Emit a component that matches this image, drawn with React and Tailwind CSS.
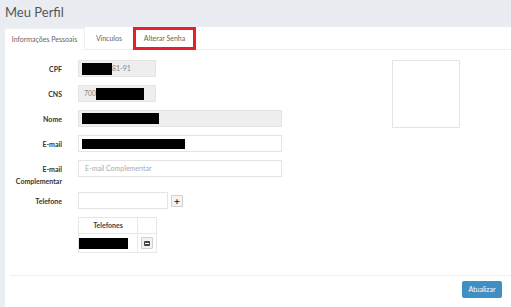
import React from 'react'

const font = { fontFamily: 'Lato, "Open Sans", "Liberation Sans", sans-serif' }

function Field({ label, children, className = 'mb-[8px]' }) {
  return (
    <div className={`flex items-start ${className}`}>
      <div className="w-[57px] shrink-0 text-right text-[7px] font-bold leading-[12px] pt-[3px] text-[#333]">
        {label}
      </div>
      <div className="ml-[16px]">{children}</div>
    </div>
  )
}

export default function App() {
  return (
    <div className="w-[511px] h-[307px] bg-[#e9edf2] overflow-hidden flex flex-col" style={font}>
      {/* page title */}
      <div className="h-[27px] px-[5px] flex items-center text-[13px] text-[#555] leading-none pb-[2px]">
        Meu Perfil
      </div>

      <div className="flex-1 ml-[5px] bg-white flex flex-col">
        {/* tabs */}
        <div className="h-[23px] flex border-b border-[#eceef1] text-[7px] text-[#666]">
          <div className="w-[80px] border-t-2 border-[#60a3d1] border-r border-[#eceef1] flex items-center justify-center -mb-px bg-white">
            Informações Pessoais
          </div>
          <div className="w-[48px] flex items-center justify-center">Vínculos</div>
          <div className="w-[63px] border-[3px] border-[#e5202b] flex items-center justify-center -mb-px">
            Alterar Senha
          </div>
        </div>

        {/* form */}
        <div className="flex pt-[10px]">
          <div className="w-[277px]">
            <Field label="CPF">
              <div className="w-[78px] h-[17px] bg-[#eeeeee] border border-[#e4e4e4] flex items-center pl-[3px] text-[7px] text-[#888]">
                <span className="w-[30px] h-[12px] bg-black" />
                <span>81-91</span>
              </div>
            </Field>
            <Field label="CNS">
              <div className="w-[78px] h-[17px] bg-[#eeeeee] border border-[#e4e4e4] flex items-center pl-[5px] text-[7px] text-[#888]">
                <span>700</span>
                <span className="w-[48px] h-[12px] bg-black" />
              </div>
            </Field>
            <Field label="Nome">
              <div className="w-[204px] h-[17px] bg-[#eeeeee] border border-[#e4e4e4] flex items-center pl-[3px]">
                <span className="w-[77px] h-[11px] bg-black" />
              </div>
            </Field>
            <Field label="E-mail">
              <div className="w-[204px] h-[17px] bg-white border border-[#e4e4e4] flex items-center pl-[3px]">
                <span className="w-[103px] h-[10px] bg-black" />
              </div>
            </Field>
            <Field label={<>E-mail<br />Complementar</>} className="mb-[5px]">
              <div className="w-[204px] h-[17px] bg-white border border-[#e4e4e4] flex items-center pl-[6px] text-[7px] text-[#aaa]">
                E-mail Complementar
              </div>
            </Field>
            <Field label="Telefone">
              <div className="flex items-center">
                <div className="w-[90px] h-[17px] bg-white border border-[#e4e4e4]" />
                <div className="ml-[3px] w-[12px] h-[12px] border border-[#cfcfcf] bg-[#f4f4f4] rounded-[1px] flex items-center justify-center text-[10px] font-bold leading-none text-[#333]">
                  +
                </div>
              </div>
            </Field>
            <div className="ml-[73px]">
              <table className="border-collapse text-[7px]">
                <tbody>
                  <tr className="h-[16px]">
                    <th className="w-[59px] border border-[#e7e7e7] font-bold text-[#444]">Telefones</th>
                    <th className="w-[19px] border border-[#e7e7e7]" />
                  </tr>
                  <tr className="h-[19px]">
                    <td className="border border-[#e7e7e7] p-0 align-middle">
                      <div className="w-[49px] h-[11px] bg-black" />
                    </td>
                    <td className="border border-[#e7e7e7] p-0">
                      <div className="mx-auto w-[12px] h-[12px] border border-[#cfcfcf] bg-[#f2f2f2] rounded-[1px] flex items-center justify-center">
                        <div className="w-[6px] h-[5px] bg-[#444] rounded-[1px] flex items-center justify-center">
                          <div className="w-[4px] h-px bg-white" />
                        </div>
                      </div>
                    </td>
                  </tr>
                </tbody>
              </table>
            </div>
          </div>
          <div className="ml-[110px] w-[68px] h-[68px] border border-[#e4e4e4]" />
        </div>

        <div className="flex-1" />
        {/* footer */}
        <div className="ml-[5px] border-t border-[#f0f0f0] flex justify-end pt-[5px] pr-[9px] pb-[9px]">
          <div className="w-[40px] h-[17px] bg-[#3f8fc3] rounded-[2px] text-white text-[7px] flex items-center justify-center">
            Atualizar
          </div>
        </div>
      </div>
    </div>
  )
}
